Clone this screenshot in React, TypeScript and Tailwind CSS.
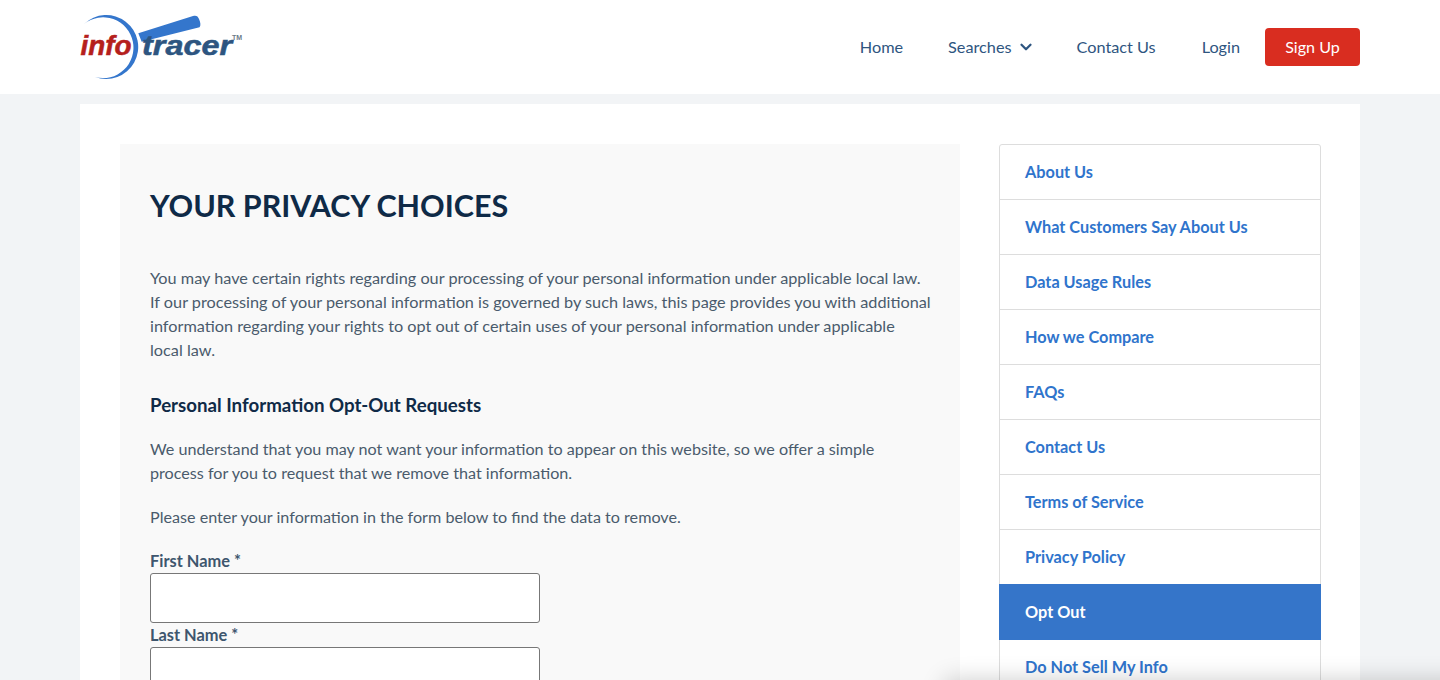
import React from "react";
import { ChevronDown } from "lucide-react";

const sideLinks = [
  "About Us",
  "What Customers Say About Us",
  "Data Usage Rules",
  "How we Compare",
  "FAQs",
  "Contact Us",
  "Terms of Service",
  "Privacy Policy",
  "Opt Out",
  "Do Not Sell My Info",
];

const Logo = () => (
  <svg width="164" height="68" viewBox="0 0 164 68" className="block">
    {/* magnifier handle */}
    <path
      d="M 58.3 20.3 L 113 3 C 116 2 118 3 119 6 C 120.5 9.5 121 12.5 119.5 14.3 L 61.7 28.7 Z"
      fill="#3476cc"
    />
    {/* lens crescent */}
    <path d="M 4 11 A 32 32 0 1 1 15 64 A 30.4 30.4 0 1 0 4 11 Z" fill="#3476cc" />
    <text
      x="0.5"
      y="42"
      fontFamily="'Liberation Sans', sans-serif"
      fontSize="27"
      fontWeight="700"
      fontStyle="italic"
      fill="#b5201c"
      stroke="#b5201c"
      strokeWidth="0.5"
      textLength="51"
      lengthAdjust="spacingAndGlyphs"
    >
      info
    </text>
    <text
      x="62"
      y="42"
      fontFamily="'Liberation Sans', sans-serif"
      fontSize="27"
      fontWeight="700"
      fontStyle="italic"
      fill="#2d5580"
      stroke="#2d5580"
      strokeWidth="0.5"
      textLength="90"
      lengthAdjust="spacingAndGlyphs"
    >
      tracer
    </text>
    <text x="152" y="27" fontFamily="'Liberation Sans', sans-serif" fontSize="7" fontWeight="700" fill="#6b7a8a">
      TM
    </text>
  </svg>
);

const Field = ({ label }: { label: string }) => (
  <div className="flex flex-col">
    <label className="text-[16.4px] leading-[24px] h-[24px] font-bold text-[#3e566e]">{label}</label>
    <input className="w-[390px] h-[50px] bg-white border border-[#777777] rounded-[3px]" />
  </div>
);

export default function App() {
  return (
    <div className="relative h-[680px] overflow-hidden bg-[#f2f4f6] font-['Lato',sans-serif]">
      <header className="h-[94px] bg-white flex items-center justify-between px-[80px]">
        <Logo />
        <nav className="flex items-center text-[#2e5580] text-[16.25px]">
          <a className="mr-[45px]">Home</a>
          <a className="mr-[42px] flex items-center">
            Searches
            <ChevronDown className="ml-[5px] w-[18px] h-[18px]" strokeWidth={3} />
          </a>
          <a className="mr-[46px]">Contact Us</a>
          <a className="mr-[25px]">Login</a>
          <button className="w-[95px] h-[38px] bg-[#d92d20] text-white rounded-[4px] text-[16.1px]">Sign Up</button>
        </nav>
      </header>
      <main className="mx-[80px] mt-[10px] bg-white p-[40px] flex items-start h-[600px]">
        <section className="w-[840px] h-[560px] shrink-0 bg-[#f9f9f9] px-[30px] pt-[40px]">
          <h1 className="text-[30.5px] leading-[42px] font-bold text-[#0f2a47]">YOUR PRIVACY CHOICES</h1>
          <p className="mt-[40px] text-[16.25px] leading-[24px] text-[#4a5b6c] whitespace-nowrap">
            You may have certain rights regarding our processing of your personal information under applicable local law.
            <br />
            If our processing of your personal information is governed by such laws, this page provides you with additional
            <br />
            information regarding your rights to opt out of certain uses of your personal information under applicable
            <br />
            local law.
          </p>
          <h2 className="mt-[31px] text-[18.7px] leading-[24px] font-bold text-[#0f2a47]">Personal Information Opt-Out Requests</h2>
          <p className="mt-[20px] text-[16.15px] leading-[24px] text-[#4a5b6c] whitespace-nowrap">
            We understand that you may not want your information to appear on this website, so we offer a simple
            <br />
            process for you to request that we remove that information.
          </p>
          <p className="mt-[20px] text-[16.15px] leading-[24px] text-[#4a5b6c]">
            Please enter your information in the form below to find the data to remove.
          </p>
          <div className="mt-[20px] flex flex-col">
            <Field label="First Name *" />
            <Field label="Last Name *" />
          </div>
        </section>
        <aside className="ml-[39px] w-[322px] shrink-0 border border-[#dddddd] rounded-t-[3px] h-[560px]">
          {sideLinks.map((l) => (
            <a
              key={l}
              className={
                l === "Opt Out"
                  ? "flex items-center h-[56px] -mx-[1px] -mt-[1px] pl-[26px] bg-[#3575c9] text-white text-[16.3px] font-bold"
                  : "flex items-center h-[55px] pl-[25px] border-b border-[#dddddd] text-[#2f74cc] text-[16.3px] font-bold"
              }
            >
              {l}
            </a>
          ))}
        </aside>
      </main>
      <div className="absolute left-[945px] right-[-40px] top-[680px] h-[40px] shadow-[0_0_24px_rgba(0,0,0,0.2)]" />
    </div>
  );
}
